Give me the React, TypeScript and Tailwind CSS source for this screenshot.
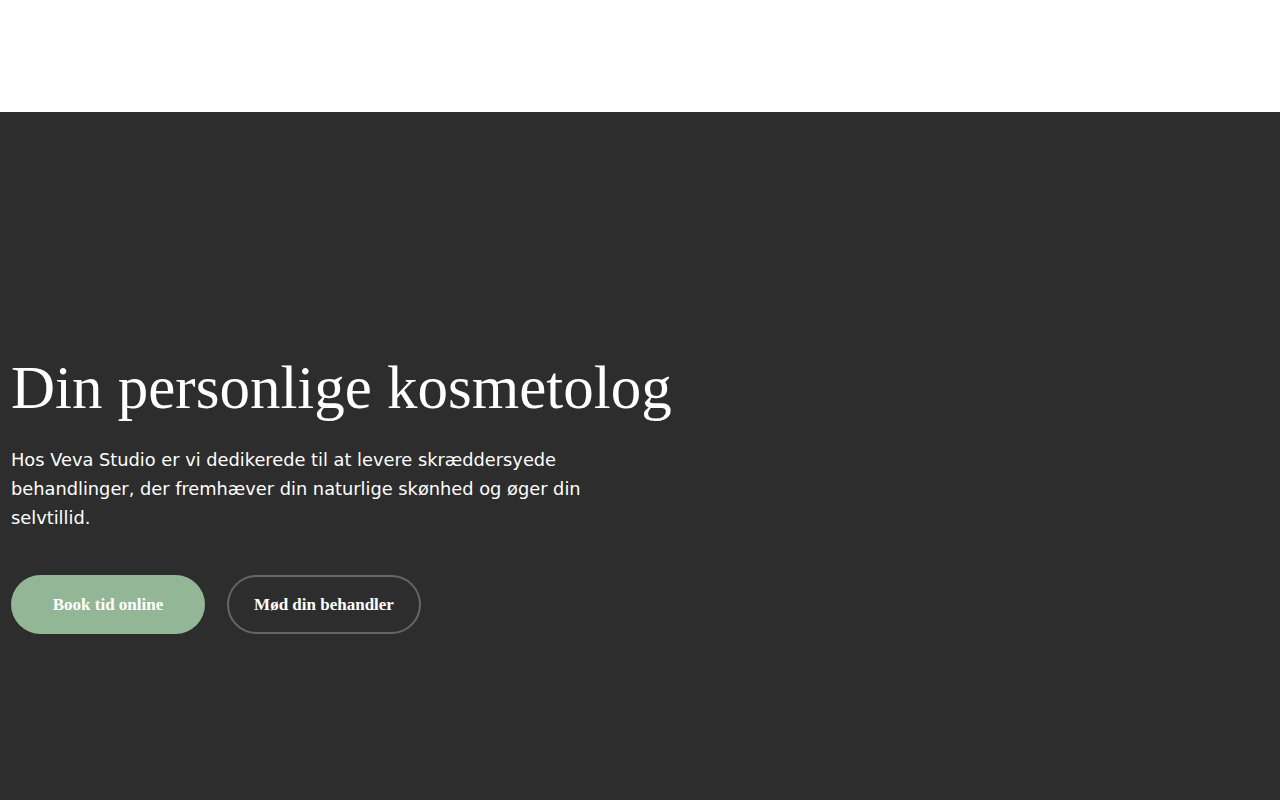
export default function App() {
  return (
    <div className="min-h-screen bg-[#2d2d2d]">
      <header className="h-[112px] bg-white" />
      <section className="px-[11px] pt-[239px] pb-[166px]">
        <div className="max-w-[600px]">
          <h1 className="whitespace-nowrap font-['Liberation_Serif',serif] text-[61px] leading-[73px] font-normal text-white">
            Din personlige kosmetolog
          </h1>
          <p className="mt-[21px] font-['DejaVu_Sans',sans-serif] text-[17.8px] leading-[29px] text-white">
            Hos Veva Studio er vi dedikerede til at levere skræddersyede behandlinger, der fremhæver din naturlige skønhed og øger din selvtillid.
          </p>
          <div className="mt-[43px] flex gap-[22px]">
            <a
              href="#"
              className="flex h-[59px] w-[194px] items-center justify-center rounded-full bg-[#93b697] font-['Liberation_Serif',serif] text-[17px] font-bold text-white"
            >
              Book tid online
            </a>
            <a
              href="#"
              className="flex h-[59px] w-[194px] items-center justify-center rounded-full border-2 border-[#666] font-['Liberation_Serif',serif] text-[17px] font-bold text-white"
            >
              Mød din behandler
            </a>
          </div>
        </div>
      </section>
    </div>
  );
}
